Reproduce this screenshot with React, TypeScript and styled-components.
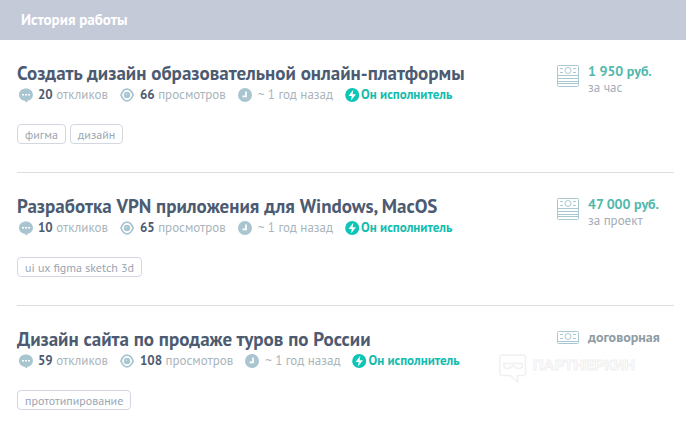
import React from "react";
import styled, { createGlobalStyle } from "styled-components";

const Global = createGlobalStyle`
  *, *::before, *::after { box-sizing: border-box; }
  body { margin: 0; background: #fff; font-family: "PT Sans", Lato, "Noto Sans", sans-serif; }
`;

const Page = styled.main`
  position: relative;
`;

const Header = styled.header`
  display: flex;
  align-items: center;
  height: 40px;
  padding: 0 21px;
  background: #c5cad9;
`;

const Heading = styled.h1`
  margin: 0;
  font-size: 15px;
  line-height: 20px;
  font-weight: 700;
  color: #fff;
`;

const List = styled.ul`
  margin: 0;
  padding: 0 12px 0 17px;
  list-style: none;
`;

const Item = styled.li`
  display: grid;
  grid-template-columns: minmax(0, 1fr) 117px;
  padding: 21px 0 28px;
  border-bottom: 1px solid #dcdee3;

  &:last-child { border-bottom: 0; }
`;

const Title = styled.h2`
  margin: 0;
  font-size: 19px;
  line-height: 24px;
  font-weight: 700;
  white-space: nowrap;
`;

const TitleLink = styled.a`
  color: #4c5b71;
  text-decoration: none;
`;

const Meta = styled.div`
  display: flex;
  gap: 12px;
  padding-left: 1px;
  font-size: 13px;
  line-height: 20px;
  white-space: nowrap;
`;

const Stat = styled.span<{ $accent?: boolean }>`
  display: flex;
  align-items: center;
  gap: ${(p) => (p.$accent ? 1 : 5)}px;
  color: ${(p) => (p.$accent ? "#12bcae" : "#a9b5ba")};
  font-weight: ${(p) => (p.$accent ? 700 : 400)};

  svg { flex: none; }
`;

const Count = styled.b`
  color: #4c5b71;
`;

const Tags = styled.div`
  display: flex;
  gap: 4px;
  margin-top: 19px;
`;

const Tag = styled.a`
  height: 20px;
  padding: 0 7px;
  border: 1px solid #d3d8e0;
  border-radius: 4px;
  font-size: 12px;
  line-height: 19px;
  color: #9aa5b3;
  text-decoration: none;
`;

const Price = styled.div`
  display: flex;
  align-items: flex-start;
  gap: 9px;
  white-space: nowrap;

  svg { flex: none; margin-top: 4px; }
`;

const Amount = styled.div<{ $fixed: boolean }>`
  font-size: 14px;
  line-height: 20px;
  font-weight: 700;
  color: ${(p) => (p.$fixed ? "#52b8ac" : "#8f9ca3")};
`;

const Unit = styled.div`
  font-size: 13px;
  line-height: 14px;
  color: #a4adb8;
`;

const Watermark = styled.div`
  position: absolute;
  right: 51px;
  top: 354px;
  display: flex;
  gap: 6px;
  font-family: "Liberation Sans", sans-serif;
  font-size: 15px;
  line-height: 22px;
  font-weight: 700;
  color: #fff;
  -webkit-text-stroke: 1px #f0f0f0;
  pointer-events: none;
`;

const ChatIcon = () => (
  <svg width="15" height="15" viewBox="0 0 15 15" aria-hidden="true">
    <path d="M8 .5C12.100 .5 14.900 3.200 14.900 6.700C14.900 10 12.500 12.200 9.800 12.600L8.800 14.500L6.500 12.700C3.400 12.300 1 10 1 6.700C1 3.200 3.900 .5 8 .5Z" fill="#a9c5d0" />
    <path d="M4 6h2v1.500H4zM7 6h2v1.500H7zM10 6h2v1.500h-2z" fill="#fff" />
  </svg>
);

const EyeIcon = () => (
  <svg width="15" height="15" viewBox="0 0 15 15" aria-hidden="true">
    <path d="M1 7C2.500 3 4.500 1.200 7 1.200S11.500 3 13.200 7C11.500 11 9.500 12.800 7 12.800S2.500 11 1 7Z" fill="none" stroke="#a9c5d0" strokeWidth="1.800" />
    <circle cx="7" cy="7" r="3.200" fill="#a9c5d0" />
    <circle cx="6.400" cy="6.400" r=".8" fill="#d5e3e8" />
  </svg>
);

const ClockIcon = () => (
  <svg width="15" height="15" viewBox="0 0 15 15" aria-hidden="true">
    <circle cx="7" cy="7" r="7" fill="#a9c5d0" />
    <path d="M8 3.500V8.300H4.500" fill="none" stroke="#fff" strokeWidth="1.700" />
  </svg>
);

const BoltIcon = () => (
  <svg width="15" height="15" viewBox="0 0 15 15" aria-hidden="true">
    <circle cx="7.200" cy="7" r="7" fill="#0cc5b5" />
    <path d="M8.300 1.700L3.500 8H6.700L6 12.500L11 6.300H7.700Z" fill="#fff" />
  </svg>
);

const MoneyIcon = ({ stack }: { stack: boolean }) => (
  <svg width="22" height={stack ? 22 : 13} viewBox={stack ? "0 0 22 22" : "0 0 22 13"} fill="none" stroke="#a9c8d1" aria-hidden="true">
    {stack ? (
      <>
        <rect x=".5" y=".5" width="21" height="21" rx="1" />
        <path d="M1 10.500H21M1 13.500H21M1 16.500H21M1 18.500H21" />
      </>
    ) : (
      <>
        <rect x=".5" y=".5" width="21" height="12" rx="1" />
        <path d="M1 10.500H21" />
      </>
    )}
    <circle cx="11" cy="5.500" r="3" />
    <path d="M3 3.500H6M3 7.500H6M16 3.500H19M16 7.500H19" />
  </svg>
);

const MaskLogo = () => (
  <svg width="28" height="29" viewBox="0 0 28 29" fill="none" stroke="#f0f0f0" aria-hidden="true">
    <path d="M2 1H25L26.500 2.500V20L25 21.500H18.500V28L11.500 21.500H2L.8 20V2.500Z" strokeWidth="1.500" />
    <path d="M4 9.500H24M5 10V12Q5 14.500 8 14.500T12 13L14 11.500L16 13Q17 14.500 20 14.500T23 12V10" strokeWidth="1.500" />
  </svg>
);

interface Job {
  title: string;
  replies: number;
  views: number;
  tags: string[];
  amount: string;
  unit?: string;
}

const jobs: Job[] = [
  { title: "Создать дизайн образовательной онлайн-платформы", replies: 20, views: 66, tags: ["фигма", "дизайн"], amount: "1 950 руб.", unit: "за час" },
  { title: "Разработка VPN приложения для Windows, MacOS", replies: 10, views: 65, tags: ["ui ux figma sketch 3d"], amount: "47 000 руб.", unit: "за проект" },
  { title: "Дизайн сайта по продаже туров по России", replies: 59, views: 108, tags: ["прототипирование"], amount: "договорная" },
];

const JobItem = ({ job }: { job: Job }) => (
  <Item>
    <div>
      <Title><TitleLink href="#">{job.title}</TitleLink></Title>
      <Meta>
        <Stat><ChatIcon /><span><Count>{job.replies}</Count> откликов</span></Stat>
        <Stat><EyeIcon /><span><Count>{job.views}</Count> просмотров</span></Stat>
        <Stat><ClockIcon />~ 1 год назад</Stat>
        <Stat $accent><BoltIcon />Он исполнитель</Stat>
      </Meta>
      <Tags>{job.tags.map((tag) => <Tag key={tag} href="#">{tag}</Tag>)}</Tags>
    </div>
    <Price>
      <MoneyIcon stack={Boolean(job.unit)} />
      <div>
        <Amount $fixed={Boolean(job.unit)}>{job.amount}</Amount>
        {job.unit && <Unit>{job.unit}</Unit>}
      </div>
    </Price>
  </Item>
);

export default function App() {
  return (
    <>
      <Global />
      <Page>
        <Header><Heading>История работы</Heading></Header>
        <List>{jobs.map((job) => <JobItem key={job.title} job={job} />)}</List>
        <Watermark><MaskLogo />ПАРТНЕРКИН</Watermark>
      </Page>
    </>
  );
}
